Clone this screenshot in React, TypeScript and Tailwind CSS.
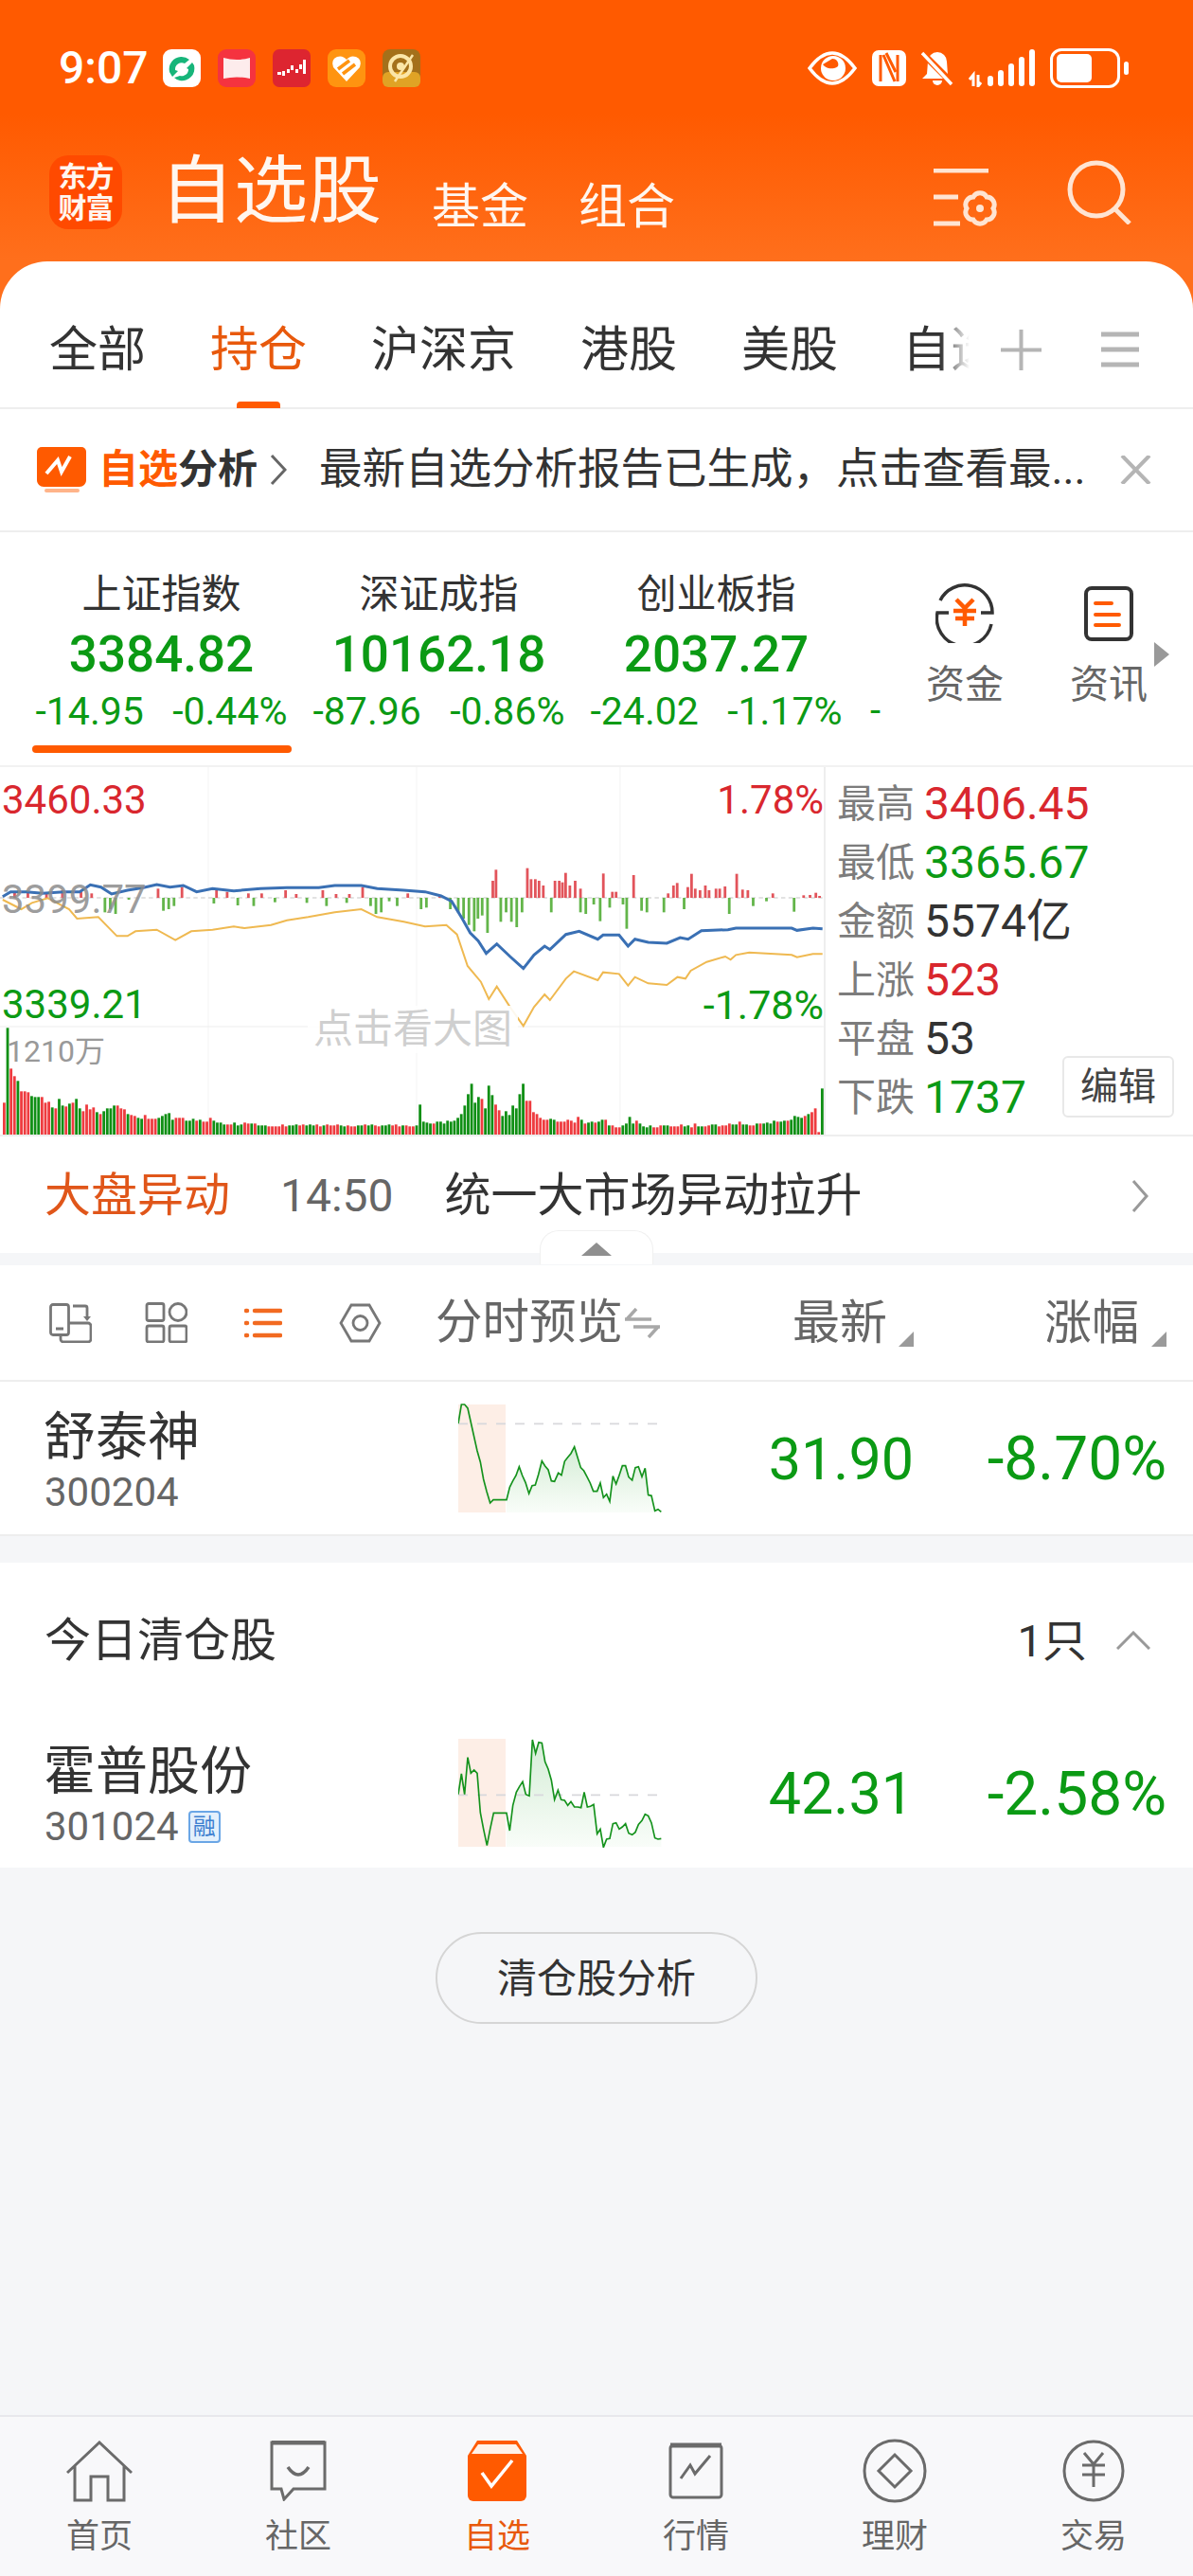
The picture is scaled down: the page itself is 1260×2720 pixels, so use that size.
import React from "react";

const RED = "#d9272e";
const GREEN = "#0b9a14";

// minute line of the index, in chart units
const BLUE_LINE =
  "5,440 20,425 50,425 80,430 120,425 150,425 170,403 190,410 210,432 240,420 270,412 295,402 320,410 345,405 370,425 400,415 440,422 490,415 540,412 600,412 630,405 680,405 710,415 760,420 800,425 830,438 850,455 870,510 885,555 900,580 915,620 935,590 960,630 985,668 1005,625 1025,597 1035,608 1065,560 1090,550 1125,575 1135,562 1165,562 1182,597 1195,575 1220,585 1255,588 1280,570 1295,575 1320,548 1370,545 1385,540 1440,540 1490,540 1500,547 1530,540 1548,542";
const YELLOW_LINE =
  "5,450 40,480 60,460 90,445 130,480 145,510 185,505 220,565 240,565 255,550 295,545 330,578 360,550 400,545 440,535 460,540 510,530 540,515 580,505 630,490 680,480 710,505 760,520 800,535 840,530 860,560 880,660 905,710 920,765 935,725 960,790 985,850 1005,790 1025,750 1035,768 1065,700 1080,677 1125,705 1135,680 1165,685 1182,722 1195,695 1220,715 1255,720 1275,695 1290,700 1300,675 1330,647 1365,630 1375,640 1385,625 1410,617 1490,625 1500,632 1530,622 1548,622";

const UP_BARS = [
  [25, 425], [50, 425], [85, 430], [115, 420], [150, 425], [170, 430], [295, 415], [340, 410], [405, 420], [425, 425],
  [465, 430], [490, 430], [535, 420], [555, 432], [605, 420], [630, 432], [655, 432], [680, 410], [765, 430], [825, 435],
  [925, 390], [931, 355], [990, 350], [997, 385], [1005, 385], [1012, 390], [1020, 405], [1042, 390], [1050, 390], [1056, 395],
  [1062, 365], [1070, 405], [1080, 390], [1090, 415], [1133, 367], [1150, 425], [1157, 425], [1190, 372], [1255, 430], [1265, 405],
  [1272, 397], [1292, 410], [1299, 368], [1306, 415], [1315, 420], [1325, 405], [1332, 420], [1345, 415], [1352, 415], [1362, 408],
  [1384, 368], [1395, 418], [1405, 420], [1452, 430], [1510, 436], [1522, 435], [1533, 428], [1540, 438],
];
const DOWN_BARS = [
  [195, 490], [205, 480], [215, 495], [240, 450], [305, 485], [315, 480], [325, 470], [400, 462], [445, 468], [475, 470],
  [515, 458], [575, 460], [612, 470], [650, 460], [695, 470], [705, 495], [715, 490], [730, 455], [745, 470], [790, 480],
  [800, 475], [845, 480], [860, 490], [870, 510], [880, 530], [890, 550], [897, 510], [905, 500], [915, 555], [940, 520],
  [950, 490], [960, 520], [970, 537], [980, 490], [1035, 490], [1090, 490], [1100, 495], [1115, 465], [1127, 518], [1145, 475],
  [1170, 465], [1177, 542], [1205, 485], [1215, 490], [1247, 490], [1285, 480], [1370, 495], [1415, 470], [1440, 455], [1492, 488],
];

// one entry per minute: bar height in px, r = up, g = down
const VOLUME =
  "34r 113g 70r 62r 57g 46r 46r 45r 41g 40g 40g 40r 34r 35r 29g 28r 38g 31g 30r 33g 34r 38g 28g 25r 32r 27r 29r 24g 22r 25g 28g 28g 31g 31r 28r 27r 22g 21r 20r 18g 17g 21r 17r 17r 17r 18g 20g 22g 23g 16g 18r 18r 18r 15g 15g 17g 15r 16g 14r 14r 18r 15g 13g 13g 11g 11r 11r 13g 10g 11g 13r 12r 12g 12r 10g 10g 10g 9r 9r 9r 9r 11r 9r 10g " +
  "10g 11g 10r 11r 10g 11g 10g 11r 9r 10g 11r 10r 10r 11r 10g 9g 10r 9r 9r 10g 10g 11r 10g 11g 10r 9r 10g 10g 11g 10r 11r 9r 10g 10r " +
  "9r 9r 10g 32g 14g 13g 12g 12r 14g 14g 12g 15g 14g 15g 18g 22g 31g 43g 54g 34g 40g 38r 28g 52g 42g 32r 26r 20g 25g 21g 31g 28g 43g 54g 36r 36r 24r 22r 18r 16r 16r 17g 16g 14r 14r 14r 16r 15r 13r 19r 16g 12r 13g 14g 13r 14g 16g 16r 10g 10r 8r 8r 10g 12g 19g 12g 15r 12g 9g 8g 10g 8r 8r 10r 10g 10g 9r 9r 9r 11r 9g 10g 8r 12r 9g 9g 9r 10r 11g 11g 9r 10r 10r 12r 11g 11g 14r 11g 11g 10r 10r 12g 12r 12g 13g 12g 15g 14r 14g 15g 15r 16g 20g 19g 18g 20r 22g 24r 28r 3r 49g";

const volumeBars = VOLUME.split(" ").map((entry, i) => ({
  x: 3 + i * 3.63,
  h: parseInt(entry),
  up: entry.endsWith("r"),
}));

function IndexChart() {
  return (
    <svg width="870" height="388" viewBox="0 30 1550.3 1164" preserveAspectRatio="none" className="block">
      {[392, 784, 1167].map((x) => (
        <line key={x} x1={x} x2={x} y1="30" y2="1195" stroke="#f5f5f5" strokeWidth="2" />
      ))}
      <line x1="0" x2="1550" y1="852" y2="852" stroke="#eeeeee" strokeWidth="3" />
      <line x1="0" x2="1550" y1="444" y2="444" stroke="#8a8a8a" strokeWidth="2" strokeDasharray="8 6" />
      {UP_BARS.map(([x, y]) => (
        <rect key={x} x={x} y={y} width="5" height={444 - y} fill="#e2545b" />
      ))}
      {DOWN_BARS.map(([x, y]) => (
        <rect key={x} x={x} y="444" width="5" height={y - 444} fill="#63b54a" />
      ))}
      <polyline points={YELLOW_LINE} fill="none" stroke="#efb951" strokeWidth="2" vectorEffect="non-scaling-stroke" />
      <polyline points={BLUE_LINE} fill="none" stroke="#3a70b4" strokeWidth="3" vectorEffect="non-scaling-stroke" />
      {volumeBars.map((b) => (
        <rect key={b.x} x={b.x * 1.782} y={1195 - b.h * 3} width="5" height={b.h * 3} fill={b.up ? "#ee3b3f" : "#0f8f14"} />
      ))}
    </svg>
  );
}

function Spark({ id, points, top, bottom }: { id: string; points: string; top: number; bottom: number }) {
  const first = points
    .split(" ")
    .map((p) => p.split(",").map(Number))
    .filter(([x]) => x >= 285);
  const area = `285,${bottom} ${first.map((p) => p.join(",")).join(" ")} 775,${bottom}`;
  return (
    <svg width="216" height="116" viewBox={`132 ${top} 648 348`} className="shrink-0">
      <defs>
        <linearGradient id={id} x1="0" y1="0" x2="0" y2="1">
          <stop offset="0" stopColor="#d5edd6" />
          <stop offset="1" stopColor="#f9fdf9" />
        </linearGradient>
      </defs>
      <rect x="132" y={top + 3} width="150" height={bottom - top - 3} fill="#fdeee6" />
      <polygon points={area} fill={`url(#${id})`} />
      <line
        x1="132"
        x2="765"
        y1={top === 100 ? 164 : 1337}
        y2={top === 100 ? 164 : 1337}
        stroke="#d8d8dc"
        strokeWidth="5"
        strokeDasharray="30 30"
      />
      <polyline points={points} fill="none" stroke="#14921c" strokeWidth="5" />
    </svg>
  );
}

const SPARK_A =
  "132,163 142,103 152,103 162,115 172,160 182,205 192,250 202,285 212,340 222,378 233,415 243,405 285,405 295,365 305,345 315,328 325,300 335,328 345,350 356,385 366,360 376,358 386,325 397,282 407,298 417,310 427,345 437,347 449,320 459,327 469,283 479,270 489,258 500,237 510,270 520,303 530,313 540,332 550,352 560,378 572,378 582,352 592,398 602,387 612,410 622,330 632,355 642,327 652,297 662,297 672,333 683,343 693,303 703,300 714,332 724,305 734,390 744,392 755,440 765,435 775,443";
const SPARK_B =
  "132,1335 142,1270 152,1335 162,1218 172,1268 182,1258 192,1268 202,1393 212,1445 223,1497 233,1445 244,1394 285,1394 295,1450 305,1370 316,1328 326,1310 336,1295 346,1335 357,1340 367,1162 377,1205 387,1170 397,1172 407,1232 417,1255 427,1290 437,1352 448,1322 458,1352 469,1354 479,1370 489,1358 500,1375 510,1375 521,1377 531,1328 541,1375 551,1373 561,1367 572,1460 582,1445 592,1503 602,1477 612,1475 622,1428 632,1425 642,1445 652,1438 662,1428 672,1458 683,1463 693,1455 703,1430 714,1418 724,1398 734,1403 744,1425 755,1473 765,1477 775,1475";

function AppIcons() {
  return (
    <div className="ml-[15px] flex gap-[18px]">
      <svg width="40" height="40" viewBox="0 0 40 40">
        <rect width="40" height="40" rx="9" fill="#fff" />
        <path d="M7 24a13 13 0 0 1 12-16 13 13 0 0 1 9 3l-5 4a7 7 0 0 0-10 7l3 1-6 6z" fill="#17b57a" />
        <path d="M33 17a13 13 0 0 1-15 16 13 13 0 0 1-6-3l6-2a7 7 0 0 0 9-7l-2-1 6-6z" fill="#17b57a" />
      </svg>
      <svg width="40" height="40" viewBox="0 0 40 40">
        <rect width="40" height="40" rx="9" fill="#f5333f" />
        <path d="M6 9q14 4 28 0v22q-14-3-28 0z" fill="#fdecec" />
      </svg>
      <svg width="40" height="40" viewBox="0 0 40 40">
        <rect width="40" height="40" rx="7" fill="#dd2530" />
        <path d="M5 27h4v-3H5zM10 28h3v-5h-3zM15 25h3v-4h-3zM19 22h3v-5h-3zM24 25h3v-4h-3zM28 21h3v-5h-3zM32 26h3V11h-3z" fill="#fff" />
      </svg>
      <svg width="40" height="40" viewBox="0 0 40 40">
        <rect width="40" height="40" rx="9" fill="#ff9410" />
        <path d="M20 34 6 19q-3-8 4-11 6-2 10 3 4-5 10-3 7 3 4 11z" fill="#fff" />
        <path d="M11 21 23 12M16 26 29 16" stroke="#ff9410" strokeWidth="3.5" />
      </svg>
      <svg width="40" height="40" viewBox="0 0 40 40">
        <rect width="40" height="40" rx="8" fill="#a4701a" />
        <rect y="24" width="40" height="16" rx="6" fill="#e0a325" />
        <circle cx="19" cy="18" r="11" fill="none" stroke="#fbe6a8" strokeWidth="4" />
        <circle cx="19" cy="18" r="4" fill="#fbe6a8" />
        <path d="M13 34 32 6" stroke="#fbe6a8" strokeWidth="2.5" />
      </svg>
    </div>
  );
}

function StatusIcons() {
  return (
    <div className="ml-auto flex items-center pr-[68px]">
      <svg width="52" height="36" viewBox="0 0 52 36" fill="none">
        <path d="M2 18Q14 2 26 2t24 16Q38 34 26 34T2 18z" stroke="#fff" strokeWidth="3.5" />
        <circle cx="27" cy="18" r="13" fill="#fff" />
        <path d="M16 14a10 8 0 0 0 16 2 6 6 0 0 0-6-8z" fill="#ff5a00" />
      </svg>
      <svg width="36" height="38" viewBox="0 0 36 38" className="ml-[16px]">
        <rect width="36" height="38" rx="7" fill="#fff" />
        <path d="M9 5v28M27 5v28" stroke="#ff5a00" strokeWidth="3" />
        <path d="M12 5l12 28M15 3l10 20" stroke="#ff5a00" strokeWidth="3" fill="none" />
      </svg>
      <svg width="34" height="38" viewBox="0 0 34 38" className="ml-[16px]">
        <path d="M17 2a10 10 0 0 1 10 10l1 14 4 4H1l5-5 1-13A10 10 0 0 1 17 2z" fill="#fff" />
        <path d="M12 32h10a5 5 0 0 1-10 0z" fill="#fff" />
        <path d="M2 4l30 30" stroke="#ff5a00" strokeWidth="7" />
        <path d="M1 3l31 33" stroke="#fff" strokeWidth="3.5" />
      </svg>
      <svg width="70" height="40" viewBox="0 0 70 40" className="ml-[16px]">
        <path d="M5 39V27l-4 5M10 27v12l3-4" stroke="#fff" strokeWidth="3" fill="none" />
        <rect x="20" y="28" width="6" height="11" rx="3" fill="#fff" />
        <rect x="31" y="22" width="6" height="17" rx="3" fill="#fff" />
        <rect x="42" y="15" width="6" height="24" rx="3" fill="#fff" />
        <rect x="53" y="8" width="6" height="31" rx="3" fill="#fff" />
        <rect x="64" y="0" width="6" height="39" rx="3" fill="#fff" />
      </svg>
      <div className="ml-[16px] flex items-center">
        <div className="flex h-[42px] w-[74px] items-center rounded-[12px] border-[3px] border-white pl-[4px]">
          <div className="h-[30px] w-[37px] rounded-[5px] bg-white" />
        </div>
        <div className="ml-[4px] h-[14px] w-[5px] rounded-full bg-white" />
      </div>
    </div>
  );
}

function Header() {
  return (
    <header className="h-[326px] bg-[linear-gradient(#ff5a00_0,#ff5a00_120px,#ff6f1c_276px)] pt-[52px]">
      <div className="flex h-[40px] items-center pl-[62px]">
        <span className="text-[48px] leading-none font-medium text-white">9:07</span>
        <AppIcons />
        <StatusIcons />
      </div>
      <div className="mt-[72px] flex h-[78px] items-center pl-[52px] text-[#fff6ef]">
        <div className="flex h-[78px] w-[77px] flex-col items-center justify-center rounded-[20px] bg-[#ff4a00] text-[30px] leading-[33px] font-bold tracking-[-1px]">
          <span>东方</span>
          <span>财富</span>
        </div>
        <span className="ml-[40px] text-[78px] leading-none">自选股</span>
        <span className="mt-[30px] ml-[53px] text-[51px] leading-none">基金</span>
        <span className="mt-[30px] ml-[53px] text-[51px] leading-none">组合</span>
        <svg width="70" height="62" viewBox="0 0 70 62" fill="none" stroke="#ffe4d2" strokeWidth="5" className="mt-[12px] ml-auto">
          <path d="M0 2h58M0 30h26M0 58h28" />
          <path d="M63 42A8 8 0 0 1 56 54.1 8 8 0 0 1 42 54.1 8 8 0 0 1 35 42 8 8 0 0 1 42 29.9 8 8 0 0 1 56 29.9 8 8 0 0 1 63 42z" />
          <circle cx="49" cy="42" r="4" fill="#ffe4d2" stroke="none" />
        </svg>
        <svg width="68" height="68" viewBox="0 0 68 68" fill="none" stroke="#ffe4d2" strokeWidth="5" className="ml-[71px] mr-[65px]">
          <circle cx="31" cy="31" r="28" />
          <path d="M50 51l16 16" />
        </svg>
      </div>
    </header>
  );
}

function Tabs() {
  return (
    <div className="relative -mt-[50px] flex h-[156px] rounded-t-[50px] border-b-2 border-[#eeeeee] bg-white pl-[52px] text-[51px] leading-none text-[#333333]">
      <div className="flex gap-[68px]">
        <span className="pt-[68px]">全部</span>
        <div className="flex h-[155px] flex-col items-center justify-between pt-[68px] text-[#e8590c]">
          <span>持仓</span>
          <div className="h-[7px] w-[46px] rounded-t-[4px] bg-[#ff5a00]" />
        </div>
        <span className="pt-[68px]">沪深京</span>
        <span className="pt-[68px]">港股</span>
        <span className="pt-[68px]">美股</span>
        <div className="relative w-[67px] whitespace-nowrap pt-[68px]">
          自选
          <div className="absolute inset-y-0 left-[40px] w-[62px] bg-gradient-to-r from-white/0 via-white to-white" />
        </div>
      </div>
      <svg width="43" height="43" viewBox="0 0 43 43" stroke="#b5b5b5" strokeWidth="4" className="relative mt-[72px] ml-[37px]">
        <path d="M0 21.5h43M21.5 0v43" />
      </svg>
      <svg width="40" height="38" viewBox="0 0 40 38" stroke="#b5b5b5" strokeWidth="5" className="mt-[74px] ml-[63px]">
        <path d="M0 3h40M0 19h40M0 35h40" />
      </svg>
    </div>
  );
}

function ReportBanner() {
  return (
    <div className="flex h-[130px] items-center border-b-2 border-[#eeeeee] bg-white pl-[39px] leading-none">
      <svg width="52" height="48" viewBox="0 0 52 48">
        <path d="M5 0h42a5 5 0 0 1 5 5v30a7 7 0 0 1-7 7H7a7 7 0 0 1-7-7V5a5 5 0 0 1 5-5z" fill="#ff5a00" />
        <path d="M10 28l12-14 4 12 9-16" stroke="#fff" strokeWidth="4" fill="none" />
        <rect x="8" y="44" width="37" height="4" rx="2" fill="#ffb48a" />
      </svg>
      <span className="ml-[13px] text-[42px] font-bold text-[#ff5a00]">自选</span>
      <span className="text-[42px] font-bold text-[#333333]">分析</span>
      <svg width="18" height="34" viewBox="0 0 18 34" fill="none" stroke="#666" strokeWidth="3" className="ml-[13px]">
        <path d="M2 2l14 15L2 32" />
      </svg>
      <span className="ml-[34px] w-[822px] text-[45.5px] leading-[50px] whitespace-nowrap text-[#333333]">
        最新自选分析报告已生成，点击查看最...
      </span>
      <svg width="33" height="30" viewBox="0 0 33 30" stroke="#b5b5b5" strokeWidth="4" className="ml-[24px]">
        <path d="M2 0l29 30M31 0L2 30" />
      </svg>
    </div>
  );
}

function IndexColumn({ name, value, change, pct, active }: { name: string; value: string; change: string; pct: string; active?: boolean }) {
  return (
    <div className="flex w-[293px] shrink-0 flex-col items-center leading-none">
      <span className="flex h-[46px] items-center text-[42px] text-[#333333]">{name}</span>
      <span className="flex h-[80px] items-center text-[53px] font-medium text-[#0b9a14]">{value}</span>
      <div className="flex h-[40px] w-[266px] items-center justify-between text-[41px] text-[#0b9a14]">
        <span>{change}</span>
        <span>{pct}</span>
      </div>
      {active && <div className="mt-[16px] h-[8px] w-[274px] rounded-[4px] bg-[#ff5a00]" />}
    </div>
  );
}

function IndexStrip() {
  return (
    <div className="relative flex h-[248px] items-start overflow-hidden border-b-2 border-[#f2f2f2] bg-white pt-[43px] pl-[24px]">
      <IndexColumn name="上证指数" value="3384.82" change="-14.95" pct="-0.44%" active />
      <IndexColumn name="深证成指" value="10162.18" change="-87.96" pct="-0.86%" />
      <IndexColumn name="创业板指" value="2037.27" change="-24.02" pct="-1.17%" />
      <span className="mt-[126px] ml-[16px] w-[30px] text-[40px] leading-[40px] text-[#0b9a14]">-</span>
      <div className="ml-[29px] flex w-[82px] shrink-0 flex-col items-center">
        <svg width="62" height="64" viewBox="0 0 62 64" fill="none" stroke="#333" strokeWidth="3.5" className="mt-[10px]">
          <path d="M5 19A29 29 0 0 1 60 32H48" />
          <path d="M14 32H2A29 29 0 0 0 59 44" />
          <path d="M22 18l9 9 9-9M19 30h24M21 38h20M31 27v19" stroke="#ff5a00" strokeWidth="4.5" />
        </svg>
        <span className="mt-[24px] text-[41px] leading-none text-[#666666]">资金</span>
      </div>
      <div className="ml-[70px] flex w-[82px] shrink-0 flex-col items-center">
        <svg width="52" height="58" viewBox="0 0 52 58" fill="none" stroke="#333" strokeWidth="4" className="mt-[14px]">
          <rect x="2" y="2" width="48" height="54" rx="6" />
          <path d="M12 18h17M12 30h25M12 41h25" stroke="#ff5a00" strokeLinecap="round" />
        </svg>
        <span className="mt-[26px] text-[41px] leading-none text-[#666666]">资讯</span>
      </div>
      <div className="absolute top-[116px] right-[25px] h-0 w-0 border-y-[13px] border-l-[16px] border-y-transparent border-l-[#999999]" />
    </div>
  );
}

function StatRow({ label, value, color }: { label: string; value: string; color: string }) {
  return (
    <div className="flex h-[62px] items-center leading-none">
      <span className="w-[92px] text-[41px] text-[#7c7c7c]">{label}</span>
      <span className="text-[48px]" style={{ color }}>
        {value}
      </span>
    </div>
  );
}

function ChartSection() {
  return (
    <div className="relative flex h-[388px] bg-white">
      <div className="relative w-[870px] shrink-0">
        <IndexChart />
        <span className="absolute top-[10px] left-[2px] text-[42px] leading-[50px] text-[#d9272e]">3460.33</span>
        <span className="absolute top-[10px] right-0 text-[42px] leading-[50px] text-[#d9272e]">1.78%</span>
        <span className="absolute top-[115px] left-[2px] text-[42px] leading-[50px] text-[#8c8c8c]/85">3399.77</span>
        <span className="absolute top-[226px] left-[2px] text-[42px] leading-[50px] text-[#0b9a14]">3339.21</span>
        <span className="absolute top-[226px] right-0 text-[43px] leading-[50px] text-[#0b9a14]">-1.78%</span>
        <span className="absolute top-[282px] left-[7px] text-[32px] leading-[36px] text-[#999999]">1210万</span>
        <span className="absolute top-[252px] left-[325px] bg-white/90 px-[6px] text-[42px] leading-[50px] text-[#cfcfcf]">点击看大图</span>
      </div>
      <div className="flex-1 border-l-2 border-[#eeeeee] pt-[8px] pl-[12px]">
        <StatRow label="最高" value="3406.45" color={RED} />
        <StatRow label="最低" value="3365.67" color={GREEN} />
        <StatRow label="金额" value="5574亿" color="#333333" />
        <StatRow label="上涨" value="523" color={RED} />
        <StatRow label="平盘" value="53" color="#333333" />
        <StatRow label="下跌" value="1737" color={GREEN} />
      </div>
      <div className="absolute top-[305px] right-[20px] flex h-[65px] w-[118px] items-center justify-center rounded-[6px] border-2 border-[#e8e8e8] bg-white text-[40px] leading-none text-[#444444]">
        编辑
      </div>
    </div>
  );
}

function MarketAlert() {
  return (
    <>
      <div className="flex h-[125px] items-center border-t-2 border-[#eeeeee] bg-white pt-[2px] pl-[47px] leading-none">
        <span className="text-[49px] text-[#e0561a]">大盘异动</span>
        <span className="ml-[53px] text-[48px] text-[#666666]">14:50</span>
        <span className="ml-[54px] text-[49px] text-[#333333]">统一大市场异动拉升</span>
        <svg width="18" height="36" viewBox="0 0 18 36" fill="none" stroke="#999" strokeWidth="3" className="ml-auto mr-[47px]">
          <path d="M2 2l14 16L2 34" />
        </svg>
      </div>
      <div className="relative h-[13px] bg-[#f5f6f8]">
        <div className="absolute -top-[24px] left-[570px] flex h-[36px] w-[120px] items-start justify-center rounded-t-[20px] border border-b-0 border-[#f0f0f0] bg-white pt-[12px]">
          <div className="h-0 w-0 border-x-[16px] border-b-[14px] border-x-transparent border-b-[#8f8f8f]" />
        </div>
      </div>
    </>
  );
}

function SortMark() {
  return <div className="h-0 w-0 self-end border-b-[16px] border-l-[16px] border-b-[#9a9a9a] border-l-transparent" />;
}

function ListHeader() {
  return (
    <div className="flex h-[123px] items-center border-b-2 border-[#eeeeee] bg-white pl-[52px] text-[50px] leading-none text-[#666666]">
      <svg width="45" height="42" viewBox="0 0 45 42" fill="none" stroke="#777" strokeWidth="2.8">
        <rect x="1.5" y="1.5" width="19" height="32" rx="2.5" />
        <path d="M12 34v4a3 3 0 0 0 3 3h26a3 3 0 0 0 3-3V24a3 3 0 0 0-3-3H21" />
        <path d="M25 3h13a2 2 0 0 1 2 2v10M7 27h8" />
        <path d="M36 14h8l-4 5z" fill="#777" stroke="none" />
      </svg>
      <svg width="45" height="43" viewBox="0 0 45 43" fill="none" stroke="#777" strokeWidth="2.8" className="ml-[56px]">
        <rect x="2" y="1.5" width="18" height="18" rx="2" />
        <circle cx="35" cy="10.5" r="9" />
        <rect x="2" y="25" width="18" height="17" rx="2" />
        <rect x="26" y="25" width="18" height="17" rx="2" />
      </svg>
      <svg width="40" height="34" viewBox="0 0 40 34" fill="none" stroke="#f26a21" strokeWidth="4.5" strokeLinecap="round" className="ml-[60px]">
        <path d="M2 4h1M11 4h27M2 17h1M11 17h27M2 30h1M11 30h27" />
      </svg>
      <svg width="45" height="42" viewBox="0 0 45 42" fill="none" stroke="#777" strokeWidth="2.8" className="ml-[60px]">
        <path d="M13 2h19l11 19-11 19H13L2 21z" />
        <circle cx="22.5" cy="21" r="7.5" />
      </svg>
      <span className="ml-[57px] w-[198px] text-[49.5px] whitespace-nowrap">分时预览</span>
      <svg width="37" height="32" viewBox="0 0 37 32" fill="none" stroke="#a8a8a8" strokeWidth="3.5" className="ml-[2px]">
        <path d="M0 12h28M12 1L2 12M37 20H9M25 31l10-11" />
      </svg>
      <span className="ml-[140px] w-[101px]">最新</span>
      <div className="mb-[35px] ml-[11px] flex h-[16px] self-end">
        <SortMark />
      </div>
      <span className="ml-[138px] w-[101px]">涨幅</span>
      <div className="mb-[35px] ml-[12px] flex h-[16px] self-end">
        <SortMark />
      </div>
    </div>
  );
}

function StockRow(props: { name: string; code: React.ReactNode; nameClass: string; spark: React.ReactNode; price: string; pct: string; className: string }) {
  return (
    <div className={`flex items-center bg-white ${props.className}`}>
      <div className="w-[484px] shrink-0 pt-[5px] pl-[46px] leading-none">
        <div className={`mb-[9px] h-[58px] leading-[58px] text-[#333333] ${props.nameClass}`}>{props.name}</div>
        <div className="flex h-[42px] items-center pl-[1px] text-[42px] text-[#666666]">{props.code}</div>
      </div>
      {props.spark}
      <span className="w-[265px] shrink-0 pt-[3px] text-right text-[61px] leading-none text-[#0b9a14]">{props.price}</span>
      <span className="w-[267px] shrink-0 pt-[3px] text-right text-[64px] leading-none text-[#0b9a14]">{props.pct}</span>
    </div>
  );
}

function Holdings() {
  return (
    <>
      <StockRow
        className="h-[163px] border-b-2 border-[#eeeeee]"
        name="舒泰神"
        nameClass="text-[55px]"
        code="300204"
        spark={<Spark id="sparkA" points={SPARK_A} top={100} bottom={445} />}
        price="31.90"
        pct="-8.70%"
      />
      <div className="h-[28px]" />
      <div className="flex h-[164px] items-center bg-white px-[47px] leading-none">
        <span className="text-[49px] text-[#333333]">今日清仓股</span>
        <span className="ml-auto text-[47px] text-[#333333]">1只</span>
        <svg width="36" height="20" viewBox="0 0 36 20" fill="none" stroke="#999" strokeWidth="3" className="mr-[-2px] ml-[31px]">
          <path d="M1 19L18 2l17 17" />
        </svg>
      </div>
      <StockRow
        className="h-[158px]"
        name="霍普股份"
        nameClass="text-[55px]"
        code={
          <>
            301024
            <span className="ml-[10px] flex h-[34px] w-[34px] items-center justify-center rounded-[4px] border-2 border-[#6aa6e6] bg-[#e3f0fc] text-[24px] leading-none text-[#3d7fd0]">
              融
            </span>
          </>
        }
        spark={<Spark id="sparkB" points={SPARK_B} top={1156} bottom={1501} />}
        price="42.31"
        pct="-2.58%"
      />
      <div className="mx-auto mt-[68px] flex h-[97px] w-[340px] items-center justify-center rounded-full border-2 border-[#d5d5d5] pt-[2px] text-[42px] leading-none text-[#333333]">
        清仓股分析
      </div>
    </>
  );
}

const NAV_ICON = "#6b6b6b";

const navItems: { label: string; active?: boolean; icon: React.ReactNode }[] = [
  {
    label: "首页",
    icon: (
      <svg width="70" height="65" viewBox="0 0 70 65" fill="none" stroke={NAV_ICON} strokeWidth="3">
        <path d="M1 34L35 2l34 32M9 26v37h17V38h18v25h17V26" />
      </svg>
    ),
  },
  {
    label: "社区",
    icon: (
      <svg width="62" height="64" viewBox="0 0 62 64" fill="none" stroke={NAV_ICON} strokeWidth="3">
        <path d="M3 2h56v49H26l-10 11-3-11H3z" />
        <path d="M3 2h56" strokeWidth="5" />
        <path d="M20 28q11 16 22 0" strokeWidth="3.5" />
      </svg>
    ),
  },
  {
    label: "自选",
    active: true,
    icon: (
      <svg width="62" height="64" viewBox="0 0 62 64">
        <path d="M10 0h42l10 16v42a6 6 0 0 1-6 6H6a6 6 0 0 1-6-6V16z" fill="#ff5a00" />
        <path d="M11 4h40l7 10H4z" fill="#fff1e8" />
        <path d="M15 34l10 14L47 21" stroke="#fff" strokeWidth="3.5" fill="none" />
      </svg>
    ),
  },
  {
    label: "行情",
    icon: (
      <svg width="58" height="60" viewBox="0 0 58 60" fill="none" stroke={NAV_ICON} strokeWidth="3">
        <rect x="2" y="3" width="54" height="55" rx="3" />
        <path d="M2 3h54" strokeWidth="5" />
        <path d="M13 38l10-14 5 9 16-19" />
      </svg>
    ),
  },
  {
    label: "理财",
    icon: (
      <svg width="68" height="68" viewBox="0 0 68 68" fill="none" stroke={NAV_ICON} strokeWidth="3">
        <circle cx="34" cy="34" r="32" />
        <path d="M34 17l17 17-17 17-17-17z" />
      </svg>
    ),
  },
  {
    label: "交易",
    icon: (
      <svg width="66" height="66" viewBox="0 0 66 66" fill="none" stroke={NAV_ICON} strokeWidth="3">
        <circle cx="33" cy="33" r="31" />
        <path d="M23 14l10 12 10-12M21 27h24M21 37h24M33 27v23" />
      </svg>
    ),
  },
];

function BottomNav() {
  return (
    <nav className="mt-auto flex h-[170px] border-t-2 border-[#e8e8ec] bg-[#f8f8fa]">
      {navItems.map((item) => (
        <div key={item.label} className="flex w-[210px] flex-col items-center pt-[22px] leading-none">
          <div className="flex h-[70px] items-center">{item.icon}</div>
          <span className={`mt-[17px] text-[35px] ${item.active ? "text-[#e8590c]" : "text-[#666666]"}`}>{item.label}</span>
        </div>
      ))}
    </nav>
  );
}

export default function App() {
  return (
    <div className="flex h-[2720px] w-[1260px] flex-col overflow-hidden bg-[#f5f6f8] font-['Roboto','Noto_Sans_CJK_SC',sans-serif]">
      <Header />
      <Tabs />
      <ReportBanner />
      <IndexStrip />
      <ChartSection />
      <MarketAlert />
      <ListHeader />
      <Holdings />
      <BottomNav />
    </div>
  );
}
